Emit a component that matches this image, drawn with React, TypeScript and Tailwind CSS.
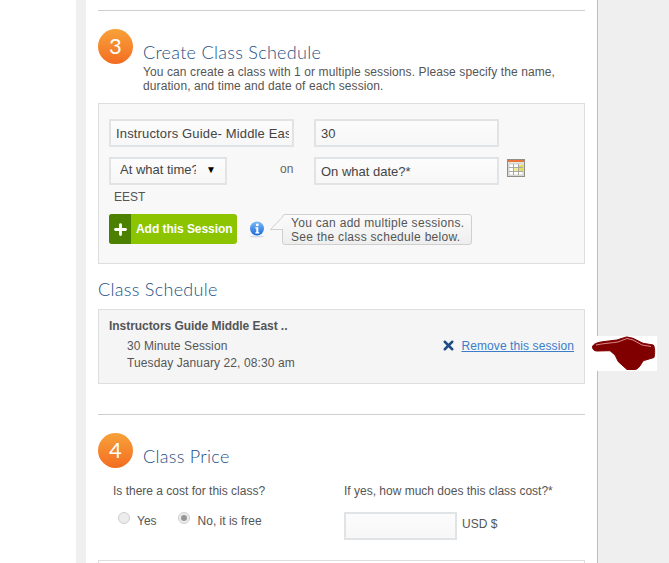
import { Plus, X } from 'lucide-react';

function StepBadge({ n }: { n: number }) {
    return (
        <div className="w-[35px] h-[35px] shrink-0 rounded-full bg-gradient-to-b from-[#f7a13a] to-[#f36c21] flex items-center justify-center text-white text-[22px] pb-[3px] font-['Lato',sans-serif]">
            {n}
        </div>
    );
}

function Field({ value, className }: { value?: string; className: string }) {
    return (
        <input
            readOnly
            value={value ?? ''}
            className={`h-[28px] border-2 border-[#e0e4e7] bg-gradient-to-b from-[#fcfcfc] to-[#f7f7f7] pl-[5px] pr-[3px] text-[13px] text-[#444] outline-none ${className}`}
        />
    );
}

function Radio({ checked, className }: { checked?: boolean; className?: string }) {
    return (
        <span className={`w-[12px] h-[12px] rounded-full border border-[#cfcfcf] bg-[#ececec] flex items-center justify-center mb-[6px] ${className ?? ''}`}>
            {checked && <span className="w-[6px] h-[6px] rounded-full bg-[#969696]" />}
        </span>
    );
}

function CalendarIcon() {
    return (
        <svg width="18" height="18" viewBox="0 0 18 18" className="ml-[8px] mt-[2px]">
            <rect x="0.5" y="0.5" width="17" height="17" fill="#e6e6e0" stroke="#8f8f88" />
            <rect x="1" y="1" width="16" height="2" fill="#e8743b" />
            <rect x="2" y="5" width="14" height="11" fill="#fff" stroke="#a9a9a2" strokeWidth="0.5" />
            <path d="M6.5 5v11M11.5 5v11M2 8.5h14M2 12.5h14" stroke="#a9a9a2" strokeWidth="1" />
            <rect x="12" y="6" width="4" height="2" fill="#e4dc62" />
            <rect x="12" y="9" width="4" height="3" fill="#e4dc62" />
            <rect x="7" y="9" width="4" height="3" fill="#f0ec9a" />
        </svg>
    );
}

function InfoIcon() {
    return (
        <svg width="16" height="17" viewBox="0 0 16 17">
            <defs>
                <linearGradient id="info" x1="0" y1="0" x2="0" y2="1">
                    <stop offset="0" stopColor="#7cbcf8" />
                    <stop offset="1" stopColor="#1a68d8" />
                </linearGradient>
            </defs>
            <ellipse cx="8" cy="15.5" rx="7" ry="1" fill="#d6dfe8" />
            <circle cx="8" cy="7.5" r="7" fill="url(#info)" />
            <circle cx="8.3" cy="3.9" r="1.4" fill="#fff" />
            <path d="M6.3 6.2h3v5h1v1.2H6.3v-1.2h1v-3.8h-1z" fill="#fff" />
        </svg>
    );
}

function PointingHand() {
    return (
        <svg width="66" height="35" viewBox="0 0 66 35">
            <rect width="66" height="35" fill="#fff" />
            <path
                d="M1.5 11 C2 8 6 6.5 12 5.7 L25.7 4 L35.7 0.9 L42 2.3 L52 7.3 L62.3 9 C64 11 64 18 63 21.5 L52.3 24.7 C50 28 48 33 44 33.5 L36 33.5 L27.3 25.7 L24 19 L19 14.7 L5.7 15 C3 15 1.5 13 1.5 11 Z"
                fill="#800000"
                stroke="#800000"
                strokeLinejoin="round"
            />
            <path d="M5 9 C12 7.5 20 7 27 6 L36 2.5 L42 4 L51 9 L60 10.5" fill="none" stroke="#d98a8a" strokeWidth="1" />
        </svg>
    );
}

export default function App() {
    return (
        <div className="h-[563px] w-[669px] overflow-hidden flex bg-[#efefef] font-['Liberation_Sans',Arial,sans-serif] text-[12px] text-[#555]">
            <div className="w-[76px] bg-white" />
            <div className="w-[10px] bg-[#f0f0f0]" />

            <main className="w-[512px] h-[563px] bg-white border-r border-[#bdbdbd] px-[12px] pt-[10px]">
                <hr className="border-[#cfcfcf]" />

                <div className="flex mt-[18px]">
                    <StepBadge n={3} />
                    <div className="ml-[10px] mt-[12px]">
                        <h2 className="font-['Lato',sans-serif] font-light text-[18px] leading-[22px] text-[#1d4f85] tracking-[0.3px]">Create Class Schedule</h2>
                        <p className="leading-[14px] w-[430px] mt-[2px] tracking-[0.1px]">
                            You can create a class with 1 or multiple sessions. Please specify the name, duration, and time and date of each session.
                        </p>
                    </div>
                </div>

                <section className="mt-[10px] h-[161px] border border-[#dedede] bg-[#f8f8f8] pl-[10px] pt-[15px]">
                    <div className="flex">
                        <Field value="Instructors Guide- Middle East" className="w-[185px] tracking-[0.15px]" />
                        <Field value="30" className="w-[185px] ml-[20px]" />
                    </div>
                    <div className="flex mt-[10px]">
                        <div className="w-[118px] h-[28px] border-2 border-[#e0e4e7] bg-gradient-to-b from-[#fcfcfc] to-[#f7f7f7] pl-[9px] pb-[3px] flex items-center">
                            <input readOnly value="At what time?" className="w-[76px] text-[13px] text-[#444] bg-transparent outline-none" />
                            <span className="ml-[10px] text-[10px] text-black">▼</span>
                        </div>
                        <span className="ml-[53px] w-[34px] mt-[3px] text-[#666]">on</span>
                        <Field value="On what date?*" className="w-[185px]" />
                        <CalendarIcon />
                    </div>
                    <div className="ml-[5px] mt-[5px] leading-[14px]">EEST</div>
                    <div className="flex items-center mt-[9px]">
                        <button className="w-[128px] h-[30px] rounded-[3px] overflow-hidden flex bg-[#8cc500] text-white font-bold">
                            <span className="w-[22px] h-full bg-[#4c8000] flex items-center justify-center">
                                <Plus size={17} strokeWidth={4} />
                            </span>
                            <span className="ml-[5px] self-center tracking-[-0.05px]">Add this Session</span>
                        </button>
                        <div className="ml-[12px] mt-[1px]">
                            <InfoIcon />
                        </div>
                        <div className="relative ml-[17px] mt-[1px] w-[190px] h-[31px] border border-[#cfcfcf] rounded-[3px] bg-gradient-to-b from-[#fbfbfb] to-[#eeeeee] pl-[8px] leading-[14px] pt-[1px] tracking-[0.3px]">
                            You can add multiple sessions.
                            <br />
                            See the class schedule below.
                            <svg width="13" height="16" viewBox="0 0 13 16" className="absolute left-[-13px] top-[1px]">
                                <path d="M13 0.5 L0.5 13.5 L13 13.5" fill="#f8f8f8" stroke="#cfcfcf" />
                                <path d="M12.5 2 L12.5 13" stroke="#f8f8f8" strokeWidth="2" />
                            </svg>
                        </div>
                    </div>
                </section>

                <h2 className="mt-[14px] font-['Lato',sans-serif] font-light text-[18px] leading-[22px] text-[#1d4f85] tracking-[0.3px]">Class Schedule</h2>

                <section className="relative mt-[9px] h-[75px] border border-[#dedede] bg-[#f5f5f5] pl-[10px] pt-[9px] flex justify-between">
                    <div>
                        <div className="font-bold leading-[15px] tracking-[-0.05px]">Instructors Guide Middle East ..</div>
                        <div className="ml-[18px] mt-[4px] leading-[17px] tracking-[0.1px]">
                            30 Minute Session
                            <br />
                            Tuesday January 22, 08:30 am
                        </div>
                    </div>
                    <div className="flex items-center h-[15px] mt-[19px] mr-[10px]">
                        <X size={15} strokeWidth={4} className="text-[#1f4e86] mr-[5px]" />
                        <a className="text-[#3b7dc9] underline tracking-[0.1px]">Remove this session</a>
                    </div>
                    <div className="absolute left-[492px] top-[26px]">
                        <PointingHand />
                    </div>
                </section>

                <hr className="mt-[30px] border-[#cfcfcf]" />

                <div className="flex mt-[18px]">
                    <StepBadge n={4} />
                    <h2 className="ml-[10px] mt-[12px] font-['Lato',sans-serif] font-light text-[18px] leading-[22px] text-[#1d4f85] tracking-[0.3px]">Class Price</h2>
                </div>

                <div className="flex mt-[15px] ml-[15px]">
                    <div className="w-[231px]">
                        <div className="leading-[16px]">Is there a cost for this class?</div>
                        <div className="flex items-center mt-[13px] ml-[5px] leading-[16px]">
                            <Radio />
                            <span className="ml-[7px]">Yes</span>
                            <Radio checked className="ml-[21px]" />
                            <span className="ml-[8px]">No, it is free</span>
                        </div>
                    </div>
                    <div>
                        <div className="leading-[16px]">If yes, how much does this class cost?*</div>
                        <div className="flex items-center mt-[13px]">
                            <Field className="w-[113px]" />
                            <span className="ml-[5px] mb-[5px]">USD $</span>
                        </div>
                    </div>
                </div>

                <div className="mt-[20px] h-[20px] border border-[#dedede]" />
            </main>
        </div>
    );
}
